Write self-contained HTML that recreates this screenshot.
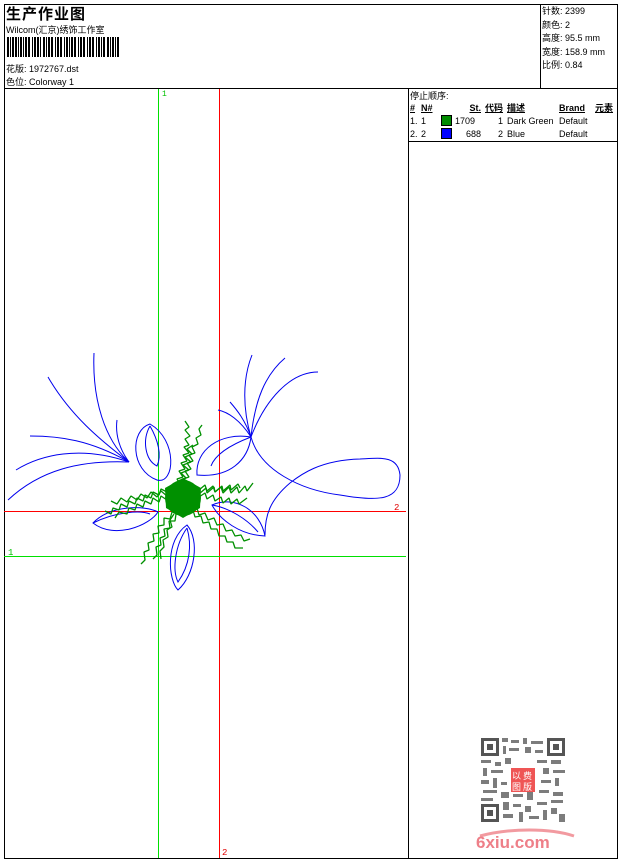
<!DOCTYPE html>
<html><head><meta charset="utf-8"><style>
body{margin:0;background:#fff;width:620px;height:860px;position:relative;overflow:hidden;font-family:"Liberation Sans","WenQuanYi Zen Hei","Noto Sans CJK SC",sans-serif;font-size:9px;color:#000}
.a{position:absolute;white-space:nowrap}
.t td{padding:0;font-size:9px;height:13px;white-space:nowrap}
</style></head><body>
<div class="a" style="left:4px;top:4px;width:612px;height:853px;border:1px solid #000"></div>
<div class="a" style="left:4px;top:88px;width:613px;border-top:1px solid #000"></div>
<div class="a" style="left:540px;top:4px;height:84px;border-left:1px solid #000"></div>
<div class="a" style="left:408px;top:88px;height:770px;border-left:1px solid #000"></div>
<div class="a" style="left:408px;top:141px;width:209px;border-top:1px solid #000"></div>

<div class="a" style="left:6px;top:3px;font-size:15px;font-weight:bold;letter-spacing:1px">生产作业图</div>
<div class="a" style="left:6px;top:23px">Wilcom(汇京)绣饰工作室</div>
<svg class="a" style="left:7px;top:37px" width="112" height="20">
<g fill="#000">
<rect x="0" y="0" width="2" height="20"/><rect x="3" y="0" width="1" height="20"/><rect x="5" y="0" width="2" height="20"/><rect x="8" y="0" width="2" height="20"/><rect x="11" y="0" width="1" height="20"/><rect x="13" y="0" width="2" height="20"/><rect x="16" y="0" width="1" height="20"/><rect x="18" y="0" width="2" height="20"/><rect x="21" y="0" width="2" height="20"/><rect x="25" y="0" width="1" height="20"/><rect x="27" y="0" width="2" height="20"/><rect x="30" y="0" width="2" height="20"/><rect x="33" y="0" width="1" height="20"/><rect x="36" y="0" width="2" height="20"/><rect x="39" y="0" width="1" height="20"/><rect x="41" y="0" width="2" height="20"/><rect x="44" y="0" width="2" height="20"/><rect x="48" y="0" width="1" height="20"/><rect x="50" y="0" width="2" height="20"/><rect x="53" y="0" width="2" height="20"/><rect x="57" y="0" width="1" height="20"/><rect x="59" y="0" width="2" height="20"/><rect x="62" y="0" width="1" height="20"/><rect x="64" y="0" width="2" height="20"/><rect x="67" y="0" width="2" height="20"/><rect x="71" y="0" width="1" height="20"/><rect x="73" y="0" width="2" height="20"/><rect x="76" y="0" width="2" height="20"/><rect x="80" y="0" width="1" height="20"/><rect x="82" y="0" width="2" height="20"/><rect x="85" y="0" width="2" height="20"/><rect x="89" y="0" width="1" height="20"/><rect x="91" y="0" width="2" height="20"/><rect x="94" y="0" width="1" height="20"/><rect x="96" y="0" width="2" height="20"/><rect x="100" y="0" width="2" height="20"/><rect x="103" y="0" width="1" height="20"/><rect x="105" y="0" width="2" height="20"/><rect x="108" y="0" width="1" height="20"/><rect x="110" y="0" width="2" height="20"/>
</g></svg>
<div class="a" style="left:6px;top:62px">花版: 1972767.dst</div>
<div class="a" style="left:6px;top:75px">色位: Colorway 1</div>

<div class="a" style="left:542px;top:5px;line-height:13.5px">针数: 2399<br>颜色: 2<br>高度: 95.5 mm<br>宽度: 158.9 mm<br>比例: 0.84</div>

<div class="a" style="left:410px;top:89px">停止顺序:</div>
<table class="t a" style="left:410px;top:101px;border-collapse:collapse;table-layout:fixed">
<tr style="font-weight:bold;text-decoration:underline"><td style="width:11px">#</td><td style="width:20px">N#</td><td style="width:14px"></td><td style="width:26px;text-align:right">St.</td><td style="width:22px;text-align:right">代码</td><td style="width:52px;padding-left:4px">描述</td><td style="width:34px">Brand</td><td style="padding-left:2px;width:20px">元素</td></tr>
<tr><td>1.</td><td>1</td><td><span style="display:inline-block;width:9px;height:9px;background:#008c00;border:1px solid #000;vertical-align:middle"></span></td><td>1709</td><td style="text-align:right">1</td><td style="padding-left:4px">Dark Green</td><td>Default</td><td></td></tr>
<tr><td>2.</td><td>2</td><td><span style="display:inline-block;width:9px;height:9px;background:#0000ff;border:1px solid #000;vertical-align:middle"></span></td><td style="text-align:right">688</td><td style="text-align:right">2</td><td style="padding-left:4px">Blue</td><td>Default</td><td></td></tr>
</table>

<svg class="a" style="left:0;top:0" width="620" height="860">
<rect x="158" y="89" width="1" height="769" fill="#00e000"/>
<rect x="219" y="89" width="1" height="769" fill="#ff0000"/>
<rect x="4" y="511" width="402" height="1" fill="#ff0000"/>
<rect x="4" y="556" width="402" height="1" fill="#00e000"/>
<text x="162" y="96" fill="#00c000" font-size="8" font-family="Liberation Mono">1</text>
<text x="222" y="855" fill="#e00000" font-size="9" font-family="Liberation Mono">2</text>
<text x="8" y="555" fill="#00c000" font-size="9" font-family="Liberation Mono">1</text>
<text x="394" y="510" fill="#e00000" font-size="9" font-family="Liberation Mono">2</text>
<g fill="none" stroke="#0000ee" stroke-width="1">
<path d="M129 462 C100 440 70 415 48 377"/>
<path d="M129 462 C105 440 92 400 94 353"/>
<path d="M129 462 C120 450 115 435 117 420"/>
<path d="M129 462 C90 440 60 436 30 436"/>
<path d="M129 462 C80 445 40 455 16 470"/>
<path d="M129 462 C80 460 40 470 8 500"/>
<path d="M251 437 C243 410 242 380 252 355"/>
<path d="M251 437 C255 400 265 375 285 358"/>
<path d="M251 437 C265 400 290 372 318 372"/>
<path d="M251 437 C240 420 228 412 218 410"/>
<path d="M251 437 C245 420 237 410 230 402"/>
<path d="M251 437 C260 470 300 490 340 495 C380 502 400 500 400 475 C398 455 380 458 360 459 C320 460 300 475 290 483 C270 500 265 515 265 535"/>
<path d="M150 424 C130 430 130 470 157 480 C175 485 178 440 150 424 Z"/>
<path d="M150 426 C142 440 145 460 157 466 C162 455 158 440 150 426"/>
<path d="M251 437 C220 432 195 450 197 475 C230 478 248 460 251 437 Z"/>
<path d="M251 437 C230 445 215 455 211 466"/>
<path d="M93 523 C110 505 145 505 158 512 C150 525 115 540 93 523 Z"/>
<path d="M93 523 C115 512 140 510 150 514"/>
<path d="M212 505 C235 495 260 510 265 536 C240 535 220 520 212 505 Z"/>
<path d="M212 505 C230 508 248 520 258 532"/>
<path d="M187 525 C165 540 168 580 178 590 C195 575 200 540 187 525 Z"/>
<path d="M187 528 C175 545 172 570 178 582 C190 565 192 545 187 528"/>
</g>
<g fill="none" stroke="#009000" stroke-width="1.3" stroke-linejoin="bevel">
<path d="M180 485 l-3 -6 l6 -2 l-4 -6 l6 -2 l-4 -6 l6 -2 l-4 -6 l6 -2 l-5 -6 l5 -2 l-4 -6 l5 -3 l-5 -6 l4 -3 l-4 -6"/>
<path d="M186 485 l-3 -6 l6 -2 l-4 -6 l6 -2 l-4 -6 l6 -2 l-4 -6 l6 -2 l-3 -6 l6 -3 l-2 -6 l5 -3 l-2 -6 l3 -4"/>
<path d="M183 485 l-5 -4 l8 -3 l-5 -5 l8 -3 l-6 -5 l8 -3 l-6 -5 l7 -3 l-5 -5 l6 -4"/>
<path d="M167 492 l-6 -3 l-2 6 l-6 -3 l-2 6 l-6 -3 l-2 6 l-6 -3 l-2 6 l-6 -3 l-2 6 l-6 -3 l-2 6 l-6 -2 l-2 6 l-6 -3"/>
<path d="M167 500 l-6 -4 l-2 6 l-6 -4 l-2 6 l-6 -3 l-2 6 l-6 -3 l-2 6 l-6 -2 l-2 6 l-8 -2 l-4 6"/>
<path d="M167 496 l-6 -5 l-4 6 l-6 -5 l-4 6 l-6 -4 l-4 6 l-6 -4 l-4 6 l-6 -4 l-4 6 l-6 -3"/>
<path d="M199 490 l6 -5 l2 6 l6 -5 l2 6 l6 -5 l2 6 l6 -6 l2 6 l6 -6 l2 6 l6 -7 l2 5 l6 -8"/>
<path d="M199 497 l6 -4 l2 6 l6 -4 l2 6 l6 -4 l2 6 l6 -5 l2 6 l6 -5 l2 5 l8 -6"/>
<path d="M199 494 l7 -6 l1 5 l7 -6 l1 5 l7 -6 l1 5 l7 -6 l1 5 l7 -6 l2 4"/>
<path d="M193 510 l2 7 l6 -1 l2 7 l6 -1 l2 7 l6 0 l2 7 l6 0 l2 6 l6 0 l2 6 l8 0"/>
<path d="M197 508 l2 7 l6 -2 l3 7 l6 -2 l3 7 l6 -1 l3 7 l6 -1 l3 6 l6 -1 l3 6 l6 -2"/>
<path d="M172 512 l-2 7 l-6 -1 l0 7 l-6 1 l1 7 l-6 1 l1 7 l-6 2 l1 7 l-5 2 l1 8 l-4 4"/>
<path d="M176 514 l-1 7 l-6 0 l1 7 l-6 1 l1 7 l-5 2 l1 7 l-5 2 l1 8 l-4 4"/>
<path d="M174 514 l-4 6 l2 7 l-5 3 l1 7 l-5 3 l1 7 l-4 4 l1 8"/>
</g>
<polygon points="183,478 201,488 200,508 183,518 166,508 165,488" fill="#009000"/>
<circle cx="183" cy="498" r="18" fill="#009000"/>
</svg>

<svg class="a" style="left:481px;top:738px" width="84" height="84">
<g fill="#555">
<rect x="0" y="0" width="18" height="18"/><rect x="66" y="0" width="18" height="18"/><rect x="0" y="66" width="18" height="18"/>
</g>
<g fill="#fff"><rect x="3" y="3" width="12" height="12"/><rect x="69" y="3" width="12" height="12"/><rect x="3" y="69" width="12" height="12"/></g>
<g fill="#555"><rect x="6" y="6" width="6" height="6"/><rect x="72" y="6" width="6" height="6"/><rect x="6" y="72" width="6" height="6"/></g>
<g fill="#666" opacity="0.85">
<rect x="21" y="0" width="6" height="4"/><rect x="30" y="2" width="8" height="3"/><rect x="42" y="0" width="4" height="6"/><rect x="50" y="3" width="12" height="3"/>
<rect x="22" y="8" width="3" height="8"/><rect x="28" y="10" width="10" height="3"/><rect x="44" y="9" width="6" height="6"/><rect x="54" y="12" width="8" height="3"/>
<rect x="0" y="22" width="10" height="3"/><rect x="14" y="24" width="6" height="4"/><rect x="24" y="20" width="6" height="6"/><rect x="56" y="22" width="10" height="3"/><rect x="70" y="22" width="10" height="4"/>
<rect x="2" y="30" width="4" height="8"/><rect x="10" y="32" width="12" height="3"/><rect x="62" y="30" width="6" height="6"/><rect x="72" y="32" width="12" height="3"/>
<rect x="0" y="42" width="8" height="4"/><rect x="12" y="40" width="4" height="10"/><rect x="20" y="44" width="6" height="3"/><rect x="60" y="42" width="10" height="3"/><rect x="74" y="40" width="4" height="8"/>
<rect x="2" y="52" width="14" height="3"/><rect x="20" y="54" width="8" height="6"/><rect x="32" y="56" width="10" height="3"/><rect x="46" y="54" width="6" height="8"/><rect x="58" y="52" width="10" height="3"/><rect x="72" y="54" width="10" height="4"/>
<rect x="0" y="60" width="12" height="3"/><rect x="22" y="64" width="6" height="8"/><rect x="32" y="66" width="8" height="3"/><rect x="44" y="68" width="6" height="6"/><rect x="56" y="64" width="10" height="3"/><rect x="70" y="62" width="12" height="3"/>
<rect x="22" y="76" width="10" height="4"/><rect x="38" y="74" width="4" height="10"/><rect x="48" y="78" width="10" height="3"/><rect x="62" y="72" width="4" height="10"/><rect x="70" y="70" width="6" height="6"/><rect x="78" y="76" width="6" height="8"/>
</g>
<rect x="30" y="30" width="24" height="24" fill="#ef5555"/>
<g fill="#fff" font-size="9" font-family="WenQuanYi Zen Hei"><text x="31" y="41">以</text><text x="42" y="41">费</text><text x="31" y="52">图</text><text x="42" y="52">版</text></g>
</svg>
<svg class="a" style="left:470px;top:826px" width="110" height="28">
<path d="M10 10 C40 2 80 2 104 10" stroke="#f29aa0" stroke-width="3" fill="none"/>
<text x="6" y="22" font-family="Liberation Sans" font-weight="bold" font-size="17" fill="#ee7f88">6xiu.com</text>
</svg>
</body></html>
